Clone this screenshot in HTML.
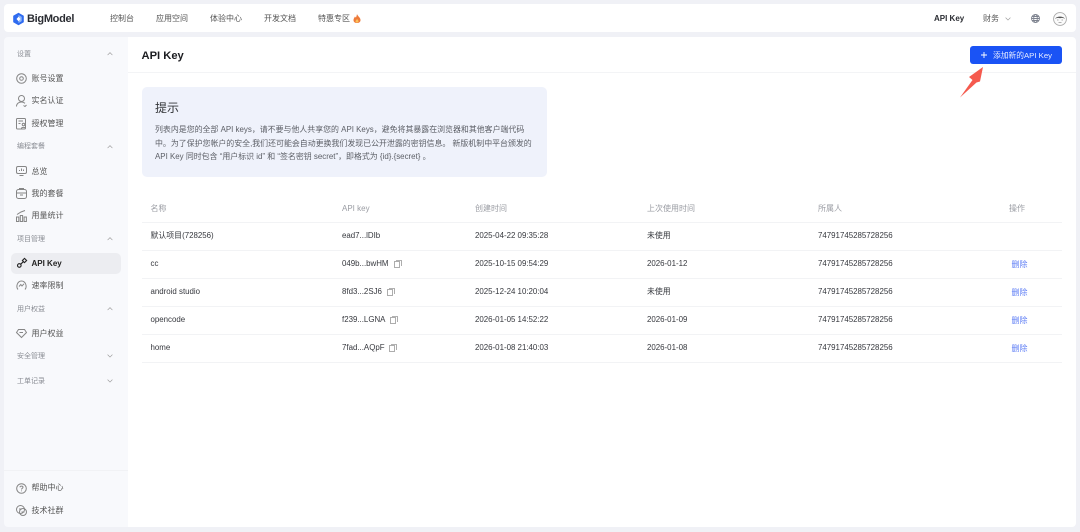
<!DOCTYPE html>
<html lang="zh">
<head>
<meta charset="utf-8">
<style>
*{margin:0;padding:0;box-sizing:border-box}
html,body{width:1080px;height:532px;overflow:hidden;background:#f0f1f6;font-family:"Liberation Sans","Noto Sans CJK SC",sans-serif}
#w{position:absolute;left:0;top:0;width:1080px;height:532px;filter:blur(.3px)}
.t{position:absolute;white-space:nowrap;line-height:14px;height:14px}
.box{position:absolute}
svg{position:absolute;overflow:visible;fill:none}
.nav{font-size:8px;color:#555;top:12px}
.sec{font-size:7px;color:#8a8d94;left:17px}
.it{font-size:8px;color:#555;left:31.5px}
.th{font-size:8px;color:#9a9ca3;top:201.5px}
.td{font-size:7.9px;color:#36383e}
.del{font-size:8px;color:#5c7cf5;left:1011.5px}
.line{position:absolute;left:142px;width:920px;height:1px;background:#f2f3f5}
.ic{stroke:#868686;stroke-width:1}
.ch{stroke:#999;stroke-width:.8}
.cp{stroke:#999;stroke-width:.8}
.hint{left:155px;font-size:7.93px;color:#5c5f66}
</style>
</head>
<body>
<div id="w">
<div class="box" style="left:4px;top:4px;width:1072px;height:28px;background:#fff;border-radius:4px"></div>
<div class="box" style="left:4px;top:37px;width:124px;height:490px;background:#f8f9fc;border-radius:4px 0 0 4px"></div>
<div class="box" style="left:128px;top:37px;width:948px;height:490px;background:#fff;border-radius:0 4px 4px 0"></div>
<div class="box" style="left:128px;top:72px;width:948px;height:1px;background:#f3f4f6"></div>
<div class="box" style="left:4px;top:470px;width:124px;height:1px;background:#f1f2f5"></div>

<svg style="left:13px;top:12.500px" width="11" height="12" viewBox="0 0 11 12"><path d="M5.500 .3L10.300 3V9L5.500 11.700L.7 9V3Z" fill="#2f6bf0" stroke="#2f6bf0" stroke-linejoin="round"/><path d="M5.500 2L8.700 3.900V8.100L5.500 10Z" fill="#8fb8f8"/><path d="M5.500 3.700L7.500 6L5.500 8.300L3.500 6Z" fill="#fff"/></svg>
<div class="t" style="left:27px;top:11.500px;font-size:11px;font-weight:700;color:#2b2d33;letter-spacing:-.3px">BigModel</div>
<div class="t nav" style="left:110px">控制台</div>
<div class="t nav" style="left:156px">应用空间</div>
<div class="t nav" style="left:210px">体验中心</div>
<div class="t nav" style="left:264px">开发文档</div>
<div class="t nav" style="left:318px">特惠专区</div>
<svg style="left:353px;top:14px" width="8" height="9" viewBox="0 0 8 9"><path d="M4 0C4.500 2 7.500 3.500 7.500 6C7.500 8 6 9 4 9S.5 8 .5 6C.5 4.500 1.500 3.500 2 2.500C2.500 3.300 2.800 3.500 3 3.500C3.500 2.500 3.800 1 4 0Z" fill="#ee7a3a"/><path d="M4 5C5 6 5.500 6.500 5.500 7.300C5.500 8.200 4.800 8.700 4 8.700S2.500 8.200 2.500 7.300C2.500 6.500 3.500 6 4 5Z" fill="#fbc25c"/></svg>
<div class="t" style="left:934px;top:12px;font-size:8px;font-weight:700;color:#2b2d33">API Key</div>
<div class="t nav" style="left:983px">财务</div>
<svg class="ch" style="left:1005px;top:16.500px" width="6" height="4" viewBox="0 0 7 5"><path d="M.5 .8L3.500 3.800L6.500 .8"/></svg>
<svg style="left:1031px;top:14px" width="9" height="9" viewBox="0 0 9 9" stroke="#7d828e" stroke-width=".9"><circle cx="4.500" cy="4.500" r="4"/><ellipse cx="4.500" cy="4.500" rx="1.800" ry="4"/><path d="M.5 4.500H8.500M1 2.500H8M1 6.500H8"/></svg>
<svg style="left:1053px;top:11.500px" width="14" height="14" viewBox="0 0 14 14"><circle cx="7" cy="7" r="6.400" fill="#fbfbfb" stroke="#aaa" stroke-width=".9"/><path d="M2 7C3.300 3.800 10.700 3.800 12 7C10.500 5.700 8.500 5.600 7 6.200C5.500 5.600 3.500 5.700 2 7Z" fill="#555"/><path d="M4 8H5.500M8.500 8H10M5.500 10.500H8.500" stroke="#999" stroke-width=".7"/></svg>

<div class="t" style="left:141.500px;top:48.500px;font-size:11.2px;font-weight:700;color:#1c1d21">API Key</div>
<div class="box" style="left:970px;top:46px;width:92px;height:18px;background:#1a53f5;border-radius:3px"></div>
<svg style="left:981px;top:52px" width="6" height="6" viewBox="0 0 6 6" stroke="#fff" stroke-width=".9"><path d="M3 0V6M0 3H6"/></svg>
<div class="t" style="left:993px;top:48.500px;font-size:7.75px;color:#e9eeff">添加新的API Key</div>
<svg style="left:959px;top:66px" width="25" height="32" viewBox="0 0 25 32"><path d="M1 31.500L13.500 14L10 11L24 1L21 15.500L17.500 16.500Z" fill="#f55a4e"/></svg>

<div class="box" style="left:142px;top:87px;width:405px;height:90px;background:#eff2fb;border-radius:5px"></div>
<div class="t" style="left:155px;top:101px;font-size:12px;color:#333538">提示</div>
<div class="t hint" style="top:123px">列表内是您的全部 API keys，请不要与他人共享您的 API Keys，避免将其暴露在浏览器和其他客户端代码</div>
<div class="t hint" style="top:137px">中。为了保护您帐户的安全,我们还可能会自动更换我们发现已公开泄露的密钥信息。 新版机制中平台颁发的</div>
<div class="t hint" style="top:150px">API Key 同时包含 “用户标识 id” 和 “签名密钥 secret”，即格式为 {id}.{secret} 。</div>

<div class="t th" style="left:150.500px">名称</div>
<div class="t th" style="left:342px">API key</div>
<div class="t th" style="left:475px">创建时间</div>
<div class="t th" style="left:647px">上次使用时间</div>
<div class="t th" style="left:818px">所属人</div>
<div class="t th" style="left:1009px">操作</div>
<div class="line" style="top:222px"></div>
<div class="line" style="top:250px"></div>
<div class="line" style="top:278px"></div>
<div class="line" style="top:306px"></div>
<div class="line" style="top:334px"></div>
<div class="line" style="top:362px"></div>

<div class="t td" style="left:150.500px;top:229px">默认项目(728256)</div>
<div class="t td" style="left:342px;top:229px">ead7...lDIb</div>
<div class="t td" style="left:475px;top:229px">2025-04-22 09:35:28</div>
<div class="t td" style="left:647px;top:229px">未使用</div>
<div class="t td" style="left:818px;top:229px">74791745285728256</div>

<div class="t td" style="left:150.500px;top:257px">cc</div>
<div class="t td" style="left:342px;top:257px">049b...bwHM</div>
<svg class="cp" style="left:394px;top:259.500px" width="8" height="8" viewBox="0 0 8 8"><rect x=".5" y="1.500" width="5" height="6"/><path d="M2 .5H7.500V6"/></svg>
<div class="t td" style="left:475px;top:257px">2025-10-15 09:54:29</div>
<div class="t td" style="left:647px;top:257px">2026-01-12</div>
<div class="t td" style="left:818px;top:257px">74791745285728256</div>
<div class="t del" style="top:257.500px">删除</div>

<div class="t td" style="left:150.500px;top:285px">android studio</div>
<div class="t td" style="left:342px;top:285px">8fd3...2SJ6</div>
<svg class="cp" style="left:387px;top:287.500px" width="8" height="8" viewBox="0 0 8 8"><rect x=".5" y="1.500" width="5" height="6"/><path d="M2 .5H7.500V6"/></svg>
<div class="t td" style="left:475px;top:285px">2025-12-24 10:20:04</div>
<div class="t td" style="left:647px;top:285px">未使用</div>
<div class="t td" style="left:818px;top:285px">74791745285728256</div>
<div class="t del" style="top:285.500px">删除</div>

<div class="t td" style="left:150.500px;top:313px">opencode</div>
<div class="t td" style="left:342px;top:313px">f239...LGNA</div>
<svg class="cp" style="left:390.300px;top:315.500px" width="8" height="8" viewBox="0 0 8 8"><rect x=".5" y="1.500" width="5" height="6"/><path d="M2 .5H7.500V6"/></svg>
<div class="t td" style="left:475px;top:313px">2026-01-05 14:52:22</div>
<div class="t td" style="left:647px;top:313px">2026-01-09</div>
<div class="t td" style="left:818px;top:313px">74791745285728256</div>
<div class="t del" style="top:313.500px">删除</div>

<div class="t td" style="left:150.500px;top:341px">home</div>
<div class="t td" style="left:342px;top:341px">7fad...AQpF</div>
<svg class="cp" style="left:389.300px;top:343.500px" width="8" height="8" viewBox="0 0 8 8"><rect x=".5" y="1.500" width="5" height="6"/><path d="M2 .5H7.500V6"/></svg>
<div class="t td" style="left:475px;top:341px">2026-01-08 21:40:03</div>
<div class="t td" style="left:647px;top:341px">2026-01-08</div>
<div class="t td" style="left:818px;top:341px">74791745285728256</div>
<div class="t del" style="top:341.500px">删除</div>

<!-- sidebar -->
<div class="t sec" style="top:48px">设置</div>
<svg class="ch" style="left:106.500px;top:52px" width="6" height="4" viewBox="0 0 7 5"><path d="M.5 3.800L3.500 .8L6.500 3.800"/></svg>
<svg class="ic" style="left:16px;top:73px" width="11" height="11" viewBox="0 0 11 11"><circle cx="5.500" cy="5.500" r="4.800"/><circle cx="5.500" cy="5.500" r="1.800"/></svg>
<div class="t it" style="top:71.500px">账号设置</div>
<svg class="ic" style="left:16px;top:95px" width="11" height="12" viewBox="0 0 11 12"><circle cx="5.500" cy="3.500" r="3"/><path d="M.5 11.500C.5 8.500 3 7 5.500 7C7 7 8 7.500 9 8.300M7.500 10.500L9 11.500L10.500 10"/></svg>
<div class="t it" style="top:94px">实名认证</div>
<svg class="ic" style="left:16px;top:118px" width="11" height="12" viewBox="0 0 11 12"><rect x=".5" y=".5" width="9" height="10.500" rx="1"/><path d="M2.500 3H7M2.500 5.500H4.500"/><circle cx="7.500" cy="6.500" r="1.300"/><path d="M5.500 10.500C5.500 9 9.500 9 9.500 10.500"/></svg>
<div class="t it" style="top:116.500px">授权管理</div>

<div class="t sec" style="top:140px">编程套餐</div>
<svg class="ch" style="left:106.500px;top:145px" width="6" height="4" viewBox="0 0 7 5"><path d="M.5 3.800L3.500 .8L6.500 3.800"/></svg>
<svg class="ic" style="left:16px;top:166px" width="11" height="10" viewBox="0 0 11 10"><rect x=".5" y=".5" width="10" height="7" rx="1.500"/><path d="M3.500 9.500H7.500M3.500 5V4M5.500 5V2.500M7.500 5V3.500"/></svg>
<div class="t it" style="top:164.500px">总览</div>
<svg class="ic" style="left:16px;top:188px" width="11" height="11" viewBox="0 0 11 11"><rect x=".5" y="1.500" width="10" height="9" rx="2"/><path d="M.5 5H10.500M3.500 1.500V.5H7.500V1.500M4 7H7"/></svg>
<div class="t it" style="top:187px">我的套餐</div>
<svg class="ic" style="left:16px;top:210px" width="11" height="12" viewBox="0 0 11 12"><rect x=".5" y="7" width="2.300" height="4.500"/><rect x="4.300" y="5.500" width="2.300" height="6"/><rect x="8.100" y="7" width="2.300" height="4.500"/><path d="M1 4.500L5 2L9 .5"/></svg>
<div class="t it" style="top:209px">用量统计</div>

<div class="t sec" style="top:232.500px">项目管理</div>
<svg class="ch" style="left:106.500px;top:237px" width="6" height="4" viewBox="0 0 7 5"><path d="M.5 3.800L3.500 .8L6.500 3.800"/></svg>
<div class="box" style="left:11px;top:253px;width:110px;height:21px;background:#ecedf1;border-radius:5px"></div>
<svg style="left:16.500px;top:258px" width="10" height="10" viewBox="0 0 10 10" stroke="#222" stroke-width="1.100"><circle cx="2.300" cy="7.500" r="1.800"/><rect x="6" y="1" width="3" height="3" transform="rotate(45 7.500 2.500)"/><path d="M3.700 6.200L6.200 3.800"/></svg>
<div class="t" style="left:31.500px;top:256.500px;font-size:8px;font-weight:700;color:#222">API Key</div>
<svg class="ic" style="left:16px;top:280px" width="11" height="11" viewBox="0 0 11 11"><path d="M2 9.500C-.5 6.500 1.500 1 5.500 1S11.500 6.500 9 9.500"/><path d="M3 6.500L4.800 4.500L6 6L8 3.800"/></svg>
<div class="t it" style="top:279px">速率限制</div>

<div class="t sec" style="top:302.500px">用户权益</div>
<svg class="ch" style="left:106.500px;top:307px" width="6" height="4" viewBox="0 0 7 5"><path d="M.5 3.800L3.500 .8L6.500 3.800"/></svg>
<svg class="ic" style="left:16px;top:329px" width="11" height="9" viewBox="0 0 11 9"><path d="M2.500 .5H8.500L10.500 3.500L5.500 8.500L.5 3.500Z"/><path d="M3.500 3.500H7"/></svg>
<div class="t it" style="top:326.500px">用户权益</div>

<div class="t sec" style="top:349.500px">安全管理</div>
<svg class="ch" style="left:106.500px;top:354px" width="6" height="4" viewBox="0 0 7 5"><path d="M.5 .8L3.500 3.800L6.500 .8"/></svg>
<div class="t sec" style="top:374.500px">工单记录</div>
<svg class="ch" style="left:106.500px;top:379px" width="6" height="4" viewBox="0 0 7 5"><path d="M.5 .8L3.500 3.800L6.500 .8"/></svg>

<svg class="ic" style="left:16px;top:483px" width="11" height="11" viewBox="0 0 11 11"><circle cx="5.500" cy="5.500" r="4.800"/><path d="M4 4.300C4 2.800 7 2.800 7 4.300C7 5.300 5.500 5.300 5.500 6.500M5.500 7.500V8.300"/></svg>
<div class="t it" style="top:481px">帮助中心</div>
<svg class="ic" style="left:16px;top:505px" width="11" height="11" viewBox="0 0 11 11"><circle cx="4.500" cy="4.500" r="4"/><circle cx="7" cy="7" r="3.500"/><path d="M3 4H6M5.500 7H8.500"/></svg>
<div class="t it" style="top:503.500px">技术社群</div>
</div>
</body>
</html>
